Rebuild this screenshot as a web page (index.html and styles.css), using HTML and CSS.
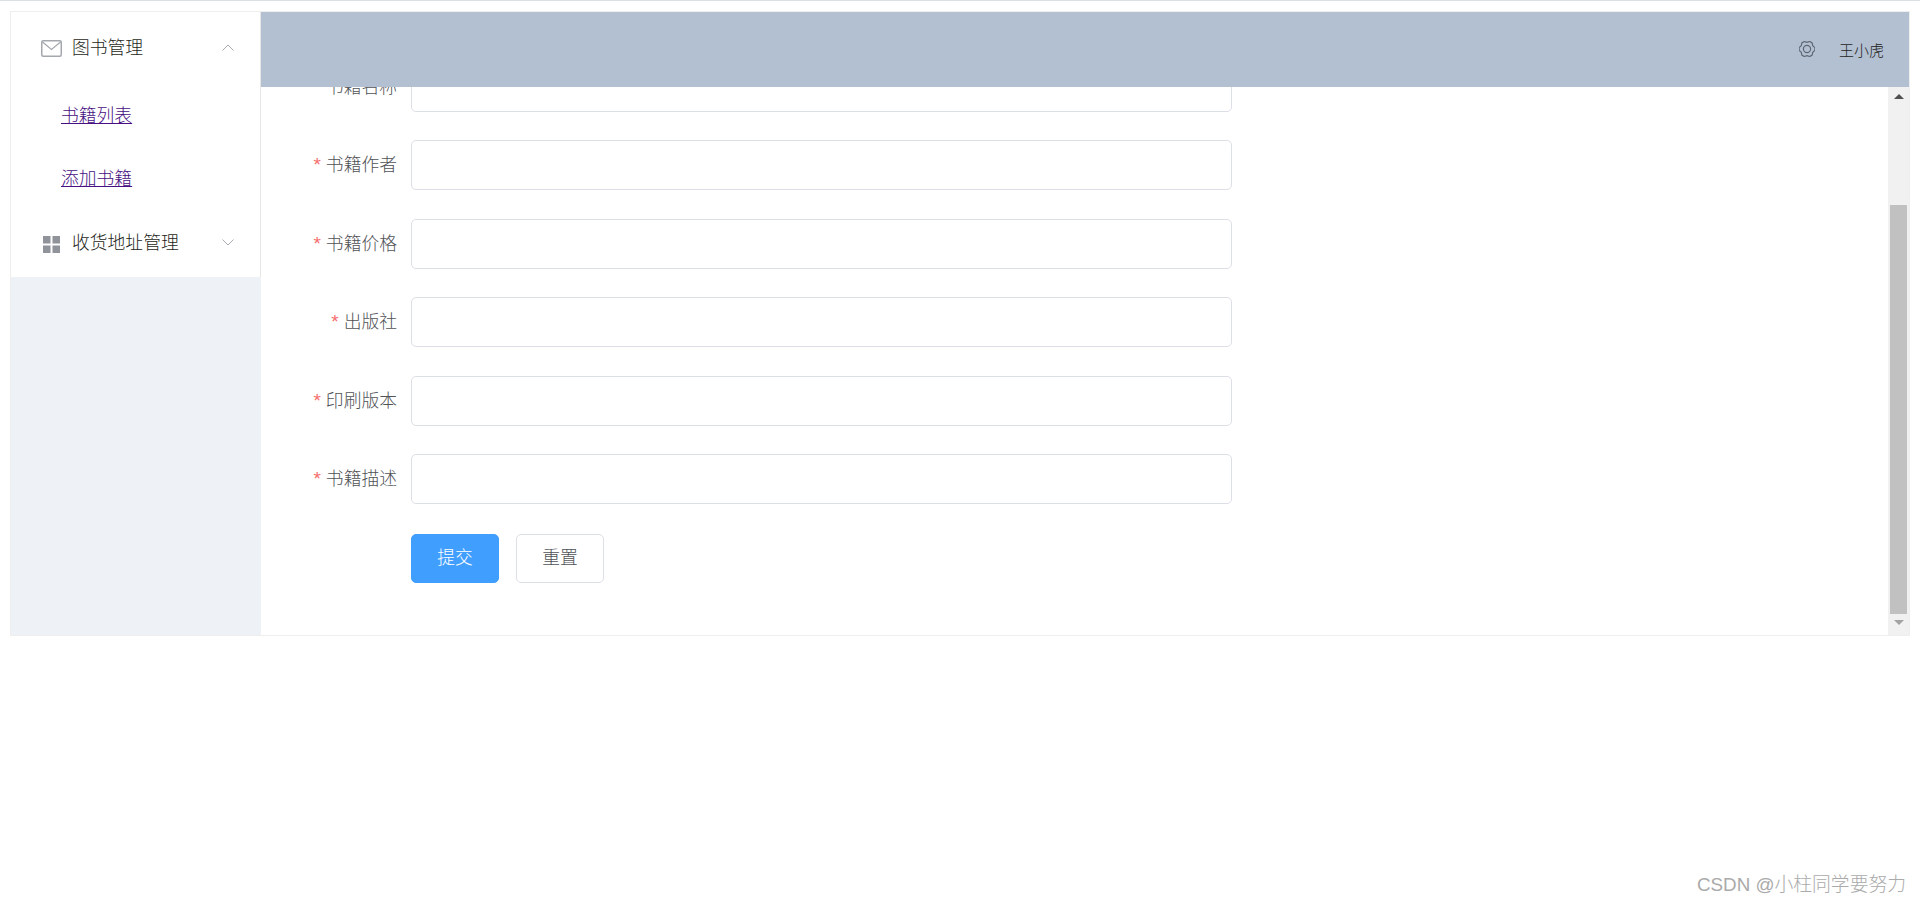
FILE: index.html
```html
<!DOCTYPE html>
<html lang="en">

    <head>
        <meta charset="UTF-8">
        <meta name="viewport" content="width=device-width, initial-scale=1.0">
        <title>添加书籍</title>
        <link rel="stylesheet" href="styles.css">
    </head>

    <body>
        <div id="screen">
            <div id="sidebar">
                <ul class="menu">
                    <li class="menu-title">
                        <svg class="menu-icon" viewBox="0 0 21 17" width="21" height="17">
                            <rect x="0.75" y="0.75" width="19.5" height="15.5" rx="1.5" fill="none" stroke="#a4a7ad" stroke-width="1.5" />
                            <path d="M1.5 2 L10.5 9.5 L19.5 2" fill="none" stroke="#a4a7ad" stroke-width="1.2" />
                        </svg>
                        <span class="menu-text">图书管理</span>
                        <svg class="menu-arrow" viewBox="0 0 12 7" width="12" height="7">
                            <path d="M0.5 6.5 L6 1 L11.5 6.5" fill="none" stroke="#a9abb0" stroke-width="1" />
                        </svg>
                    </li>
                    <li class="menu-item"><a href="#list">书籍列表</a></li>
                    <li class="menu-item"><a href="#add">添加书籍</a></li>
                    <li class="menu-title">
                        <svg class="menu-icon icon-grid" viewBox="0 0 21 17" width="21" height="17">
                            <rect x="2" y="0" width="7.5" height="7.5" fill="#909399" />
                            <rect x="11.5" y="0" width="7.5" height="7.5" fill="#909399" />
                            <rect x="2" y="9.5" width="7.5" height="7.5" fill="#909399" />
                            <rect x="11.5" y="9.5" width="7.5" height="7.5" fill="#909399" />
                        </svg>
                        <span class="menu-text">收货地址管理</span>
                        <svg class="menu-arrow" viewBox="0 0 12 7" width="12" height="7">
                            <path d="M0.5 0.5 L6 6 L11.5 0.5" fill="none" stroke="#a9abb0" stroke-width="1" />
                        </svg>
                    </li>
                </ul>
            </div>

            <div id="content">
                <div id="header">
                    <svg class="gear" viewBox="0 0 16 16" width="16" height="16">
                        <path d="M15.88 6.61 L15.88 9.39 L13.72 11.3 L13.14 14.13 L10.74 15.52 L8 14.6 L5.26 15.52 L2.86 14.13 L2.28 11.3 L0.12 9.39 L0.12 6.61 L2.28 4.7 L2.86 1.87 L5.26 0.48 L8 1.4 L10.74 0.48 L13.14 1.87 L13.72 4.7 Z" fill="none" stroke="#5f6673" stroke-width="1.2" />
                        <circle cx="8" cy="8" r="3.6" fill="none" stroke="#5f6673" stroke-width="1.2" />
                    </svg>
                    <span class="user">王小虎</span>
                </div>

                <div id="main">
                    <form class="book-form">
                        <div class="form-row">
                            <label class="required">书籍名称</label>
                            <input class="input-field" type="text" />
                        </div>
                        <div class="form-row">
                            <label class="required">书籍作者</label>
                            <input class="input-field" type="text" />
                        </div>
                        <div class="form-row">
                            <label class="required">书籍价格</label>
                            <input class="input-field" type="text" />
                        </div>
                        <div class="form-row">
                            <label class="required">出版社</label>
                            <input class="input-field" type="text" />
                        </div>
                        <div class="form-row">
                            <label class="required">印刷版本</label>
                            <input class="input-field" type="text" />
                        </div>
                        <div class="form-row">
                            <label class="required">书籍描述</label>
                            <input class="input-field" type="text" />
                        </div>
                        <div class="form-buttons">
                            <button class="btn btn-submit" type="button">提交</button>
                            <button class="btn" type="button">重置</button>
                        </div>
                    </form>

                    <div class="scrollbar">
                        <div class="arrow-up"></div>
                        <div class="thumb"></div>
                        <div class="arrow-down"></div>
                    </div>
                </div>
            </div>
        </div>

        <div class="watermark">CSDN @小柱同学要努力</div>
    </body>

</html>
```

FILE: styles.css
```css
*{
    margin:0;
    padding: 0;
    box-sizing: border-box;
    font-family: "Noto Sans CJK SC", "Liberation Sans", sans-serif;
    font-weight: 300;
}
html,body{
    height:100%;
    background-color: white;
    overflow: hidden;
}
body{
    border-top:1px solid rgb(220,223,230);
    padding: 10px 10px 0 10px;
}
#screen{
    width:1900px;
    height:625px;
    border:1px solid rgb(238,238,238);
    display: flex;
}
#sidebar{
    width:250px;
    flex-shrink: 0;
    background-color: rgb(238,241,246);
}
.menu{
    list-style: none;
    background-color: white;
    border-right: 1px solid rgb(230,230,230);
}
.menu-title{
    height:70px;
    display: flex;
    align-items: center;
    padding-left: 30px;
    padding-right: 26px;
    font-size: 17.8px;
    color: rgb(30,31,33);
}
.menu-icon{
    margin-right: 10px;
    margin-top: 2px;
    flex-shrink: 0;
}
.icon-grid{
    margin-top: 4px;
}
.menu-text{
    flex: 1;
    margin-top: -2px;
}
.menu-item{
    height:62.5px;
    display: flex;
    align-items: center;
    padding-left: 50px;
    font-size: 17.8px;
}
.menu-item>a{
    color: rgb(70,15,130);
    margin-top: 2px;
}
#content{
    flex: 1;
    display: flex;
    flex-direction: column;
    min-width: 0;
}
#header{
    height:75px;
    flex-shrink: 0;
    background-color: rgb(179,192,209);
    display: flex;
    align-items: center;
    justify-content: flex-end;
    padding-right: 25px;
    color: rgb(35,35,35);
    font-size: 15px;
}
.gear{
    margin-right: 24px;
    margin-top: -2px;
}
.user{
    margin-top: -1px;
}
#main{
    flex: 1;
    display: flex;
    min-height: 0;
    overflow: hidden;
}
.book-form{
    flex: 1;
    margin-top: -25.5px;
    padding-left: 25px;
}
.form-row{
    display: flex;
    height:50px;
    margin-bottom: 28.5px;
    align-items: center;
}
.form-row>label{
    width:125px;
    padding-right: 14px;
    text-align: right;
    font-size: 17.8px;
    color: rgb(80,82,86);
    margin-top: -4px;
}
.required::before{
    content: "*";
    font-family: "Liberation Sans", sans-serif;
    font-size: 19px;
    color: rgb(245,108,108);
    margin-right: 5px;
}
.input-field{
    width:821px;
    height:50px;
    border:1px solid rgb(220,223,230);
    border-radius: 5px;
    background-color: white;
    outline: none;
}
.form-buttons{
    display: flex;
    gap: 17px;
    padding-left: 125px;
    padding-top: 1px;
}
.btn{
    width:88px;
    height:49.5px;
    border:1px solid rgb(220,223,230);
    border-radius: 5px;
    background-color: white;
    color: rgb(80,82,86);
    font-size: 17.8px;
    padding-bottom: 4px;
}
.btn-submit{
    background-color: rgb(64,158,255);
    border-color: rgb(64,158,255);
    color: white;
}
.scrollbar{
    width:21px;
    flex-shrink: 0;
    background-color: rgb(241,241,241);
    display: flex;
    flex-direction: column;
    align-items: center;
}
.arrow-up{
    margin-top: 7px;
    border-left: 5px solid transparent;
    border-right: 5px solid transparent;
    border-bottom: 5px solid rgb(80,80,80);
}
.thumb{
    width:17px;
    height:409px;
    margin-top: 106px;
    background-color: rgb(193,193,193);
}
.arrow-down{
    margin-top: 6px;
    border-left: 5px solid transparent;
    border-right: 5px solid transparent;
    border-top: 5px solid rgb(163,163,163);
}
.watermark{
    position: absolute;
    right: 14px;
    bottom: 6px;
    font-family: "Liberation Sans", "Noto Sans CJK SC", sans-serif;
    font-size: 18.8px;
    color: rgb(170,170,170);
}
```
